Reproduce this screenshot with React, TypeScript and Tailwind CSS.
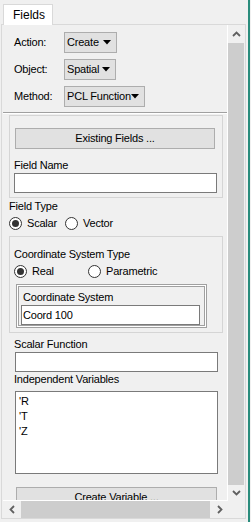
function Chevron({ dir }: { dir: "up" | "down" | "left" | "right" }) {
  const pts = {
    up: "1,6 4.5,2.5 8,6",
    down: "1,3 4.5,6.5 8,3",
    left: "6,1 2.5,4.5 6,8",
    right: "3,1 6.5,4.5 3,8",
  }[dir];
  return (
    <svg width="9" height="9" viewBox="0 0 9 9">
      <polyline points={pts} fill="none" stroke="#606060" strokeWidth="1.8" />
    </svg>
  );
}

function Caret() {
  return (
    <svg width="8" height="5" viewBox="0 0 8 5">
      <polygon points="0,0 8,0 4,4.5" fill="#000" />
    </svg>
  );
}

function DropDown({ label, w }: { label: string; w: string }) {
  return (
    <div className={`${w} h-[21px] border border-[#adadad] bg-[#e1e1e1] flex items-center justify-between pl-[2px] pr-[5px]`}>
      <span>{label}</span>
      <Caret />
    </div>
  );
}

function Radio({ on, label }: { on?: boolean; label: string }) {
  return (
    <div className="flex items-center">
      <span className="w-[13px] h-[13px] rounded-full border border-[#333] bg-white flex items-center justify-center">
        {on && <span className="w-[7px] h-[7px] rounded-full bg-[#333]" />}
      </span>
      <span className="ml-[5px]">{label}</span>
    </div>
  );
}

export default function App() {
  return (
    <div className="w-[251px] h-[522px] bg-[#f0f0f0] flex font-['Liberation_Sans',Arial,sans-serif] text-[11px] tracking-[-0.2px] text-black leading-[13px] overflow-hidden">
      <div className="w-[248px] flex flex-col">
        {/* tab strip */}
        <div className="h-[24px] flex items-end pl-[3px]">
          <div className="relative top-[1px] w-[50px] h-[21px] bg-white border border-b-0 border-[#d9d9d9] pl-[9px] pt-[4px] text-[12px] tracking-normal">
            Fields
          </div>
        </div>

        {/* tab pane */}
        <div className="ml-[1px] w-[245px] h-[495px] border border-[#d9d9d9] flex flex-col">
          <div className="h-[476px] flex pl-[1px]">
            {/* viewport */}
            <div className="w-[225px] h-full border-r border-b border-white overflow-hidden">
              <div className="w-[224px]">
                <div className="pl-[11px] pt-[7px] flex flex-col gap-[6px]">
                  <div className="flex items-center h-[21px]">
                    <span className="w-[50px]">Action:</span>
                    <DropDown label="Create" w="w-[53px]" />
                  </div>
                  <div className="flex items-center h-[21px]">
                    <span className="w-[50px]">Object:</span>
                    <DropDown label="Spatial" w="w-[52px]" />
                  </div>
                  <div className="flex items-center h-[21px]">
                    <span className="w-[50px]">Method:</span>
                    <DropDown label="PCL Function" w="w-[81px]" />
                  </div>
                </div>

                <div className="mt-[5px] h-[1px] bg-[#a0a0a0]" />
                <div className="h-[1px] bg-white" />

                {/* panel 1 */}
                <div className="mt-[1px] ml-[6px] w-[214px] h-[83px] border border-[#d5d5d5]">
                  <div className="mt-[12px] ml-[5px] w-[200px] h-[21px] border border-[#adadad] bg-[#e1e1e1] flex items-center justify-center">
                    Existing Fields ...
                  </div>
                  <div className="mt-[10px] ml-[4px]">Field Name</div>
                  <div className="mt-[1px] ml-[4px] w-[203px] h-[20px] border border-[#7a7a7a] bg-white" />
                </div>

                <div className="mt-[2px] ml-[6px]">Field Type</div>
                <div className="mt-[4px] ml-[6px] flex items-center h-[13px]">
                  <Radio on label="Scalar" />
                  <div className="ml-[8px]">
                    <Radio label="Vector" />
                  </div>
                </div>

                {/* panel 2 */}
                <div className="mt-[6px] ml-[6px] w-[214px] h-[97px] border border-[#d5d5d5]">
                  <div className="mt-[11px] ml-[4px]">Coordinate System Type</div>
                  <div className="mt-[4px] ml-[4px] flex items-center h-[13px]">
                    <div className="w-[74px]">
                      <Radio on label="Real" />
                    </div>
                    <Radio label="Parametric" />
                  </div>
                  <div className="mt-[6px] ml-[6px] w-[191px] h-[44px] border border-[#a0a0a0] shadow-[inset_0_0_0_1px_#fff,inset_0_0_0_2px_#a0a0a0] pt-[6px]">
                    <div className="ml-[6px]">Coordinate System</div>
                    <div className="mt-[1px] ml-[4px] w-[179px] h-[20px] border border-[#7a7a7a] bg-white flex items-center pl-[1px]">
                      Coord 100
                    </div>
                  </div>
                </div>

                <div className="mt-[5px] ml-[11px]">Scalar Function</div>
                <div className="mt-[1px] ml-[12px] w-[203px] h-[20px] border border-[#7a7a7a] bg-white" />
                <div className="mt-[1px] ml-[11px]">Independent Variables</div>
                <div className="mt-[5px] ml-[12px] w-[203px] h-[83px] border border-[#7a7a7a] bg-white pl-[3px] pt-[2px] leading-[15px]">
                  <div>'R</div>
                  <div>'T</div>
                  <div>'Z</div>
                </div>
                <div className="mt-[13px] ml-[13px] w-[201px] h-[21px] border border-[#adadad] bg-[#e1e1e1] flex items-center justify-center">
                  Create Variable ...
                </div>
              </div>
            </div>

            {/* vertical scrollbar */}
            <div className="w-[16px] h-[475px] flex flex-col">
              <div className="h-[18px] flex items-center justify-center">
                <Chevron dir="up" />
              </div>
              <div className="h-[442px] bg-[#cdcdcd]" />
              <div className="flex-1 flex items-center justify-center">
                <Chevron dir="down" />
              </div>
            </div>
          </div>

          {/* horizontal scrollbar */}
          <div className="h-[17px] flex pl-[1px]">
            <div className="w-[225px] h-[17px] flex">
              <div className="w-[18px] flex items-center justify-center">
                <Chevron dir="left" />
              </div>
              <div className="w-[189px] bg-[#cdcdcd]" />
              <div className="flex-1 flex items-center justify-center">
                <Chevron dir="right" />
              </div>
            </div>
          </div>
        </div>
      </div>
      <div className="w-[2px] bg-[#2a8c7c]" />
    </div>
  );
}
